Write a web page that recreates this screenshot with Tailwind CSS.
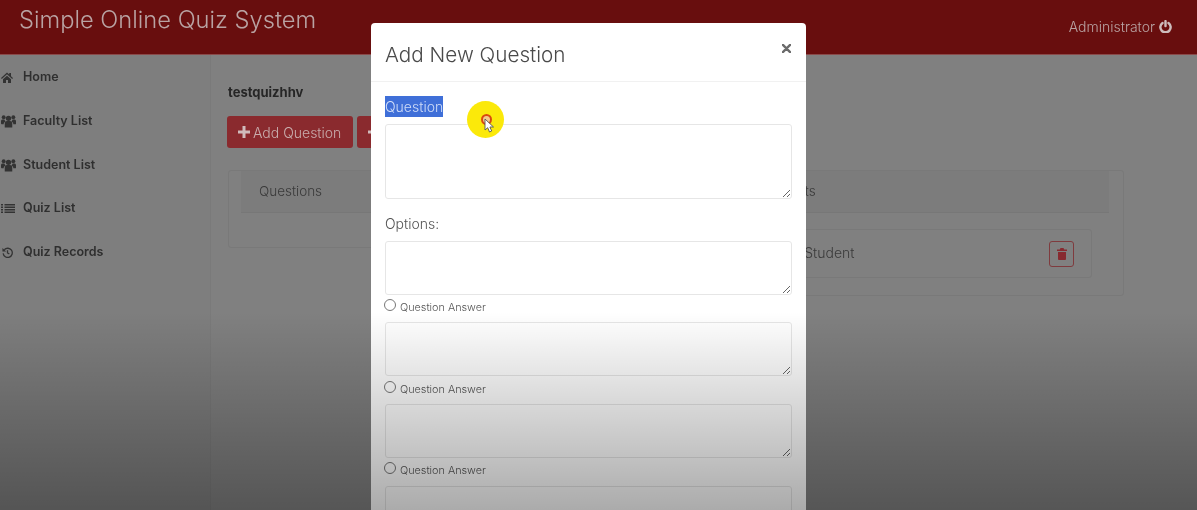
<!DOCTYPE html>
<html lang="en">
<head>
<meta charset="utf-8">
<title>Simple Online Quiz System</title>
<script src="https://cdn.jsdelivr.net/npm/@tailwindcss/browser@4"></script>
</head>
<body class="overflow-hidden">
<div class="relative w-[1197px] h-[510px] overflow-hidden bg-[#808080] font-['Inter','Liberation_Sans',sans-serif] blur-[0.6px]">
  <!-- top bar -->
  <header class="h-[55px] bg-[#680e0e] border-b border-[#8a4a4a] flex items-start justify-between pl-[19px] pr-[25px]">
    <h1 class="text-[23.700px] leading-[40px] font-light text-[#b9a3a3]">Simple Online Quiz System</h1>
    <div class="flex items-center gap-[4px] h-[53px] text-[14px] font-light text-[#b9a3a3]">
      <span>Administrator</span>
      <svg class="w-[13px] h-[13px]" viewBox="0 0 24 24" fill="none" stroke="#cdbcbc" stroke-width="4.500" stroke-linecap="round"><path d="M12 2v9"/><path d="M6.500 5.500a9.500 9.500 0 1 0 11 0"/></svg>
    </div>
  </header>
  <div class="flex h-[455px]">
    <!-- sidebar -->
    <nav class="w-[211px] shrink-0 bg-[#7e7e7e] border-r border-[#7a7a7a] pt-[11px] text-[12.500px] font-semibold text-[#2f2f2f]">
      <a class="flex items-center h-[22px] mb-[22px] pl-[1px]"><span class="w-[22px] flex"><svg class="w-[12px] h-[11px]" viewBox="0 0 24 22" fill="#333"><path d="M12 1 0 12l1.600 1.800L12 4.500l10.400 9.300L24 12l-4-3.700V2h-3.500v3.100zM4 14.500V22h6v-6h4v6h6v-7.500L12 7.300z"/></svg></span>Home</a>
      <a class="flex items-center h-[22px] mb-[22px] pl-[1px]"><span class="w-[22px] flex"><svg class="w-[15px] h-[14px]" viewBox="0 0 28 24" fill="#333"><circle cx="14" cy="7" r="5"/><circle cx="5" cy="5" r="3.600"/><circle cx="23" cy="5" r="3.600"/><path d="M7 24v-7c0-3 2-5 4-5h6c2 0 4 2 4 5v7z"/><path d="M0 16v-4c0-2 1.500-3 3-3h3.500c.5 2 1.500 3 2.500 4-2.500 1-4 2.500-4 5H2c-1 0-2-1-2-2zM28 16v-4c0-2-1.500-3-3-3h-3.500c-.5 2-1.500 3-2.500 4 2.500 1 4 2.500 4 5h4c1 0 2-1 2-2z"/></svg></span>Faculty List</a>
      <a class="flex items-center h-[22px] mb-[21.500px] pl-[1px]"><span class="w-[22px] flex"><svg class="w-[15px] h-[14px]" viewBox="0 0 28 24" fill="#333"><circle cx="14" cy="7" r="5"/><circle cx="5" cy="5" r="3.600"/><circle cx="23" cy="5" r="3.600"/><path d="M7 24v-7c0-3 2-5 4-5h6c2 0 4 2 4 5v7z"/><path d="M0 16v-4c0-2 1.500-3 3-3h3.500c.5 2 1.500 3 2.500 4-2.500 1-4 2.500-4 5H2c-1 0-2-1-2-2zM28 16v-4c0-2-1.500-3-3-3h-3.500c-.5 2-1.500 3-2.500 4 2.500 1 4 2.500 4 5h4c1 0 2-1 2-2z"/></svg></span>Student List</a>
      <a class="flex items-center h-[22px] mb-[21.500px] pl-[1px]"><span class="w-[22px] flex"><svg class="w-[14px] h-[11px]" viewBox="0 0 28 20" fill="#333"><path d="M0 1h4v3H0zM7 1h21v3H7zM0 6h4v3H0zM7 6h21v3H7zM0 11h4v3H0zM7 11h21v3H7zM0 16h4v3H0zM7 16h21v3H7z"/></svg></span>Quiz List</a>
      <a class="flex items-center h-[22px] pl-[1px]"><span class="w-[22px] flex pl-[1px]"><svg class="w-[11px] h-[11px]" viewBox="0 0 24 24" fill="none" stroke="#333" stroke-width="2.800"><path d="M5 6a10 10 0 1 1-2.500 8"/><path d="M1 2v8h8z" fill="#333" stroke="none"/><path d="M12 7v6l4 2"/></svg></span>Quiz Records</a>
    </nav>
    <!-- main -->
    <main class="flex-1 pl-[16px] pr-[73px] pt-[27px]">
      <h2 class="text-[13px] leading-[20px] font-bold text-[#262626] pl-[1px]">testquizhhv</h2>
      <div class="flex gap-[4px] mt-[14px]">
        <button class="flex items-center gap-[3px] h-[32px] w-[126px] pl-[11px] rounded-[3px] bg-[#8a2a2e] text-[14px] font-light text-[#c9adad]"><svg class="w-[12px] h-[12px]" viewBox="0 0 12 12" fill="#d0bcbc"><path d="M4.500 0h3v4.500H12v3H7.500V12h-3V7.500H0v-3h4.500z"/></svg>Add Question</button>
        <button class="flex items-center gap-[3px] h-[32px] w-[126px] pl-[11px] rounded-[3px] bg-[#8a2a2e] text-[14px] font-light text-[#c9adad]"><svg class="w-[12px] h-[12px]" viewBox="0 0 12 12" fill="#d0bcbc"><path d="M4.500 0h3v4.500H12v3H7.500V12h-3V7.500H0v-3h4.500z"/></svg>Add Student</button>
      </div>
      <div class="flex items-start gap-[14px] mt-[22px] pl-[1px]">
        <section class="w-[441px] h-[78px] border border-[#797979] rounded-[3px] pl-[12px] pr-[13px]">
          <div class="h-[42px] bg-[#7c7c7c] border-b border-[#777] pl-[18px] flex items-center text-[13.500px] font-light text-[#3a3a3a]">Questions</div>
        </section>
        <section class="w-[441px] h-[126px] border border-[#797979] rounded-[3px] px-[14px]">
          <div class="h-[42px] bg-[#7c7c7c] border-b border-[#777] pl-[30px] flex items-center text-[13.500px] font-light text-[#3a3a3a]">Quiz Students</div>
          <div class="h-[49px] mt-[16px] mr-[17px] border border-[#797979] rounded-[3px] flex items-center justify-between pr-[17px] text-[14px] font-light text-[#3a3a3a]">
            <span class="pl-[74px] -translate-y-[1px]">Test Student</span>
            <span class="w-[25px] h-[26px] border border-[#7f3b3e] rounded-[3px] flex items-center justify-center"><svg class="w-[10px] h-[12px]" viewBox="0 0 20 24" fill="#872a30"><path d="M7 0h6l1.500 3H20v3H0V3h5.500zM2 8h16v14c0 1-1 2-2 2H4c-1 0-2-1-2-2z"/></svg></span>
          </div>
        </section>
      </div>
    </main>
  </div>

  <!-- modal -->
  <div class="absolute left-[371px] top-[23px] w-[435px] h-[487px] overflow-hidden bg-white rounded-t-[4px] text-[#4d4d4d]">
    <div class="relative h-[59px] border-b border-[#f1f1f1] pl-[14px] pt-[6px] flex items-center">
      <h3 class="text-[20.700px] font-light text-[#4a4a4a]">Add New Question</h3>
      <svg class="absolute right-[15px] top-[21px] w-[9px] h-[9px]" viewBox="0 0 10 10" stroke="#6b6b6b" stroke-width="2.600" stroke-linecap="round"><path d="M1 1l8 8M9 1l-8 8"/></svg>
    </div>
    <div class="px-[14px]">
      <label class="block mt-[14px] w-max h-[21px] leading-[22px] bg-[#3f6fd8] text-[#cfdcf8] text-[14px] font-light">Question</label>
      <textarea class="block mt-[7px] w-[407px] h-[75px] border border-[#e6e6e6] rounded-[3px]"></textarea>
      <div class="mt-[15px] h-[20px] leading-[20px] text-[14px] font-light text-[#555]">Options:</div>
      <textarea class="block mt-[7px] w-[407px] h-[54px] border border-[#e6e6e6] rounded-[3px]"></textarea>
      <div class="flex items-start h-[27px] text-[10.800px] font-light text-[#555]"><span class="mt-[4px] w-[12px] h-[12px] rounded-full border border-[#777] bg-white shrink-0 -ml-[1px]"></span><span class="ml-[4px] mt-[5px]">Question Answer</span></div>
      <textarea class="block w-[407px] h-[54px] border border-[#e6e6e6] rounded-[3px]"></textarea>
      <div class="flex items-start h-[28px] text-[10.800px] font-light text-[#555]"><span class="mt-[5px] w-[12px] h-[12px] rounded-full border border-[#777] bg-white shrink-0 -ml-[1px]"></span><span class="ml-[4px] mt-[6px]">Question Answer</span></div>
      <textarea class="block w-[407px] h-[54px] border border-[#e6e6e6] rounded-[3px]"></textarea>
      <div class="flex items-start h-[28px] text-[10.800px] font-light text-[#555]"><span class="mt-[4px] w-[12px] h-[12px] rounded-full border border-[#777] bg-white shrink-0 -ml-[1px]"></span><span class="ml-[4px] mt-[5px]">Question Answer</span></div>
      <textarea class="block w-[407px] h-[54px] border border-[#e6e6e6] rounded-[3px]"></textarea>
    </div>
  </div>

  <!-- pointer highlight -->
  <div class="absolute left-[467px] top-[101px] w-[37px] h-[37px] rounded-full bg-[#fbe90a]"></div>
  <div class="absolute left-[481px] top-[114px] w-[11px] h-[11px] rounded-full border-[2px] border-[#d9480f] bg-[#f3c98a]"></div>
  <svg class="absolute left-[484px] top-[118px] w-[11px] h-[15px]" viewBox="0 0 11 15"><path d="M1 1v11l2.700-2.300L5.500 14l2.200-1-1.800-4H9.500z" fill="#fff" stroke="#555" stroke-width="0.900"/></svg>

  <!-- fade at the bottom of the frame -->
  <div class="absolute left-0 right-0 top-[312px] h-[198px] pointer-events-none bg-gradient-to-b from-black/0 to-black/33"></div>
</div>
</body>
</html>
